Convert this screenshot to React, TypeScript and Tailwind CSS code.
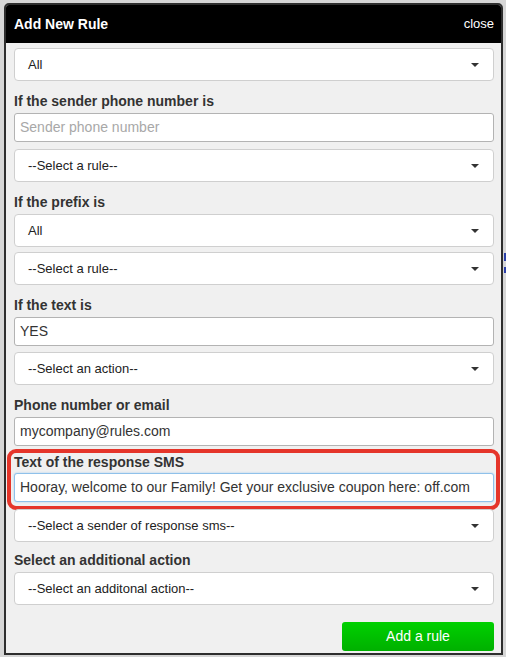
import type { ReactNode } from "react";

const font = { fontFamily: '"Liberation Sans", Arial, Helvetica, sans-serif' };

function Caret() {
  return (
    <svg width="8" height="4" viewBox="0 0 8 4" className="shrink-0">
      <path d="M0 0h8L4 4z" fill="#333" />
    </svg>
  );
}

function Select({ value, className = "" }: { value: string; className?: string }) {
  return (
    <div
      className={`flex h-[33px] items-center justify-between rounded-[4px] border border-[#cfcfcf] bg-white pl-[13px] pr-[14px] text-[13px] text-[#222] ${className}`}
    >
      <span>{value}</span>
      <Caret />
    </div>
  );
}

function Input({
  value,
  placeholder,
  focused,
  className = "",
}: {
  value?: string;
  placeholder?: string;
  focused?: boolean;
  className?: string;
}) {
  return (
    <div
      className={`flex h-[29px] items-center rounded-[3px] border bg-white pl-[5px] text-[14px] ${
        focused
          ? "border-[#8fc1ea] shadow-[0_0_2px_#9cc8ee]"
          : "border-[#b3b3b3]"
      } ${className}`}
    >
      {value ? (
        <span className="whitespace-nowrap text-[#333]">{value}</span>
      ) : (
        <span className="text-[#a8a8a8]">{placeholder}</span>
      )}
    </div>
  );
}

function Label({ children, className = "" }: { children: ReactNode; className?: string }) {
  return (
    <div className={`text-[14px] font-bold leading-[16px] text-[#333] ${className}`}>
      {children}
    </div>
  );
}

export default function App() {
  return (
    <div className="flex h-[657px] w-[506px] bg-[#d6d6d6] pl-[4px] pt-[3px]" style={font}>
      <div className="flex w-[499px] flex-col self-start overflow-hidden rounded-t-[5px] border-2 border-[#2e2e2e] bg-[#f0f0f0]">
        <div className="flex h-[38px] items-center justify-between bg-black pl-[8px] pr-[7px] text-white">
          <span className="text-[14px] font-bold">Add New Rule</span>
          <span className="text-[13px]">close</span>
        </div>

        <div className="flex flex-col pl-[8px] pr-[7px] pt-[5px] pb-[2px]">
          <Select value="All" />

          <Label className="mt-[12px] mb-[4px]">If the sender phone number is</Label>
          <Input placeholder="Sender phone number" />
          <Select value="--Select a rule--" className="mt-[7px]" />

          <Label className="mt-[12px] mb-[4px]">If the prefix is</Label>
          <Select value="All" />
          <Select value="--Select a rule--" className="mt-[5px]" />

          <Label className="mt-[12px] mb-[4px]">If the text is</Label>
          <Input value="YES" />
          <Select value="--Select an action--" className="mt-[6px]" />

          <Label className="mt-[12px] mb-[4px]">Phone number or email</Label>
          <Input value="mycompany@rules.com" />

          <div className="mt-[3px] -ml-[7px] -mr-[6px] rounded-[9px] border-4 border-[#e5352a] pl-[3px] pr-[2px] pb-[4px] pt-px">
            <Label className="mb-[3px]">Text of the response SMS</Label>
            <Input
              value="Hooray, welcome to our Family! Get your exclusive coupon here: off.com"
              focused
            />
          </div>
          <Select value="--Select a sender of response sms--" className="-mt-[1px]" />

          <Label className="mt-[10px] mb-[4px]">Select an additional action</Label>
          <Select value="--Select an additonal action--" />

          <button className="mt-[17px] h-[29px] w-[152px] self-end rounded-[3px] bg-gradient-to-b from-[#00d100] to-[#00b000] text-[14px] text-white">
            Add a rule
          </button>
        </div>
      </div>
      <div className="mt-[250px] ml-px flex flex-col gap-[6px]">
        <div className="h-[8px] w-[2px] bg-[#2b3fa8]" />
        <div className="h-[6px] w-[2px] bg-[#2b3fa8]" />
      </div>
    </div>
  );
}
